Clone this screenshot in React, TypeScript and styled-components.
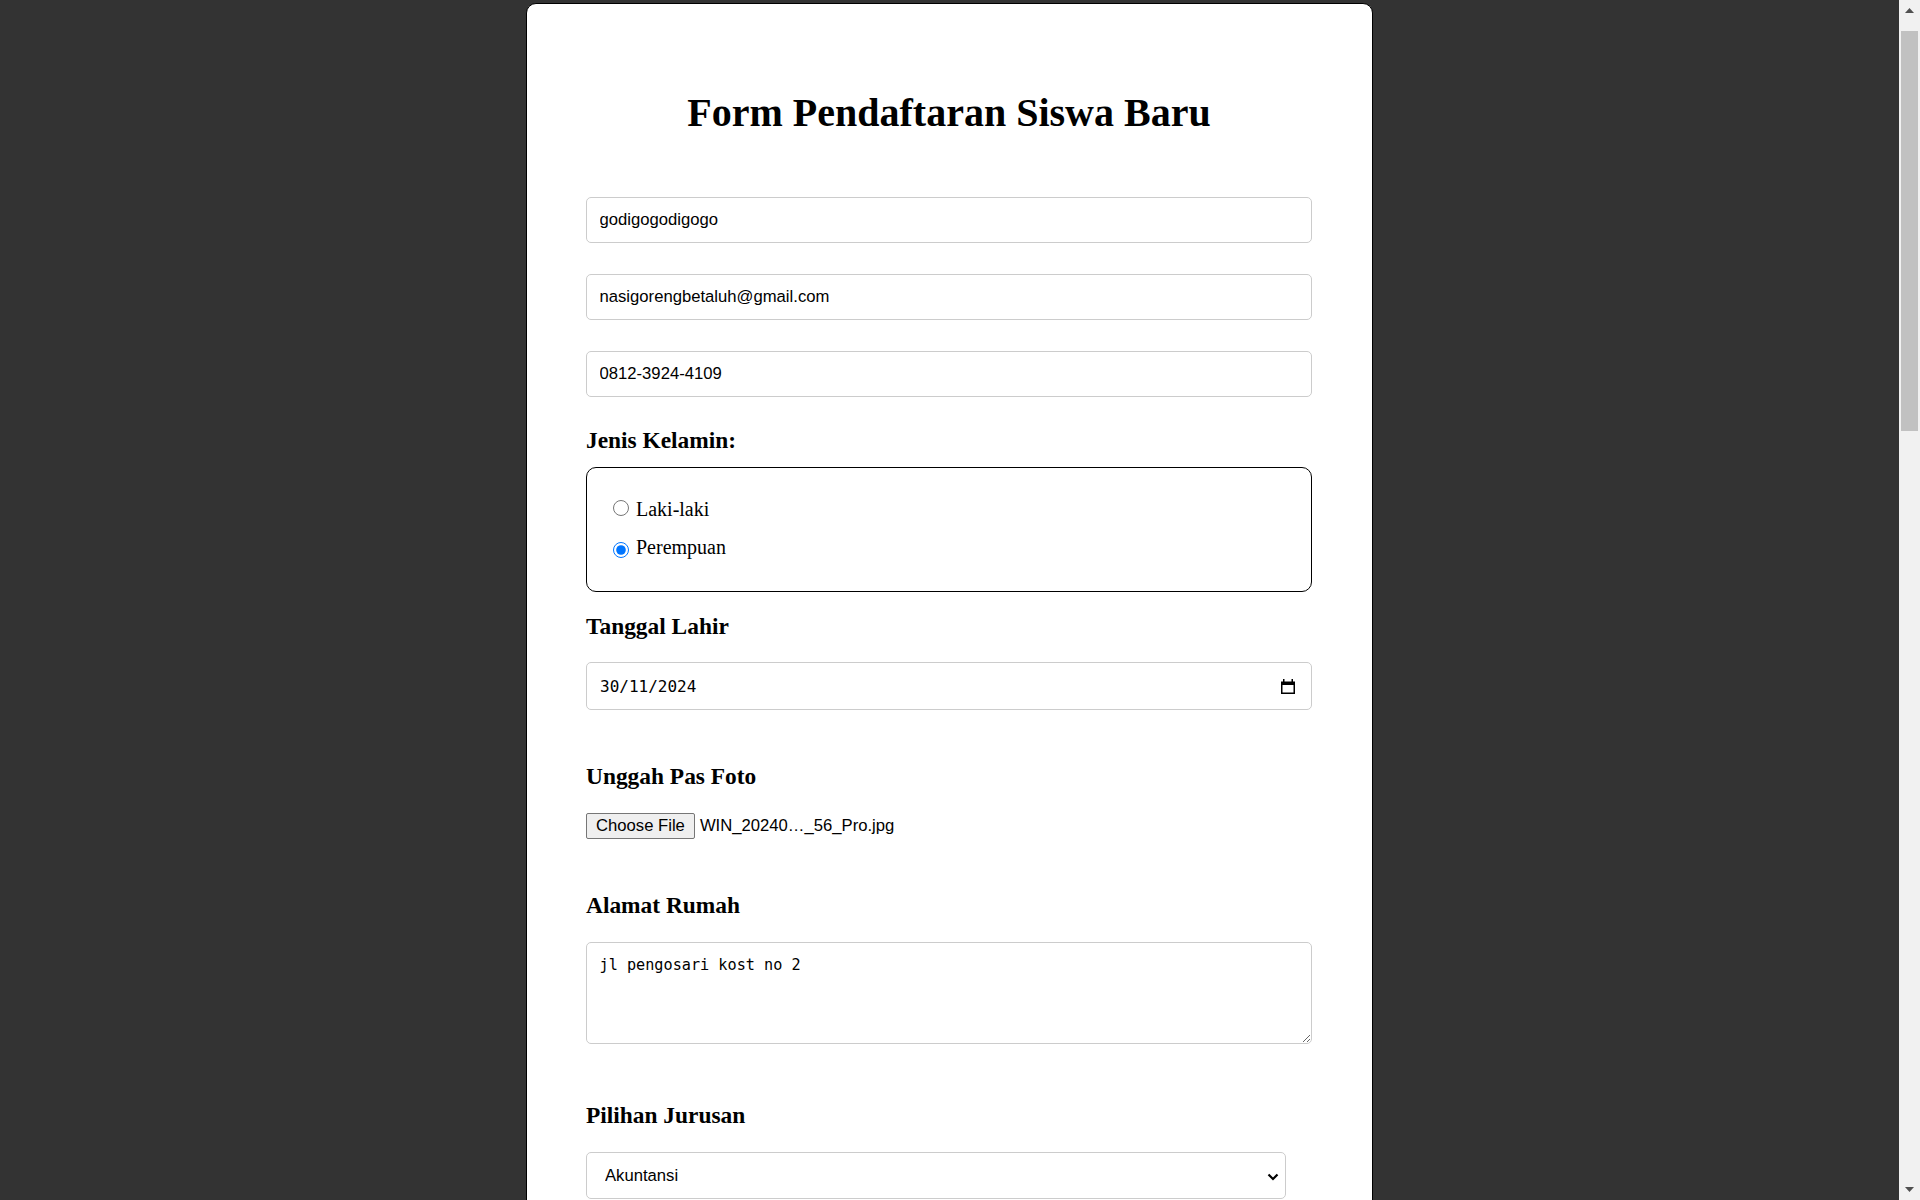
import React from "react";
import styled, { createGlobalStyle } from "styled-components";

const GlobalStyle = createGlobalStyle`
  html {
    background: #333333;
  }
  body {
    margin: 0;
    /* room for the page scrollbar drawn on the right */
    padding-right: 21px;
    background: #333333;
    font-family: "Liberation Serif", "Times New Roman", serif;
    font-size: 20px;
    color: #000;
  }
`;

const Card = styled.div`
  box-sizing: border-box;
  width: 847px;
  margin: 3px auto 11px;
  padding: 0 60px 120px 59px;
  background: #fff;
  border: 1px solid #000;
  border-radius: 10px;
`;

const Title = styled.h1`
  margin: 86px 0 61px;
  font-size: 40px;
  line-height: 46px;
  font-weight: 700;
  text-align: center;
`;

const Fields = styled.div`
  display: flex;
  flex-direction: column;
  gap: 31px;
`;

const TextInput = styled.input`
  box-sizing: border-box;
  display: block;
  width: 100%;
  height: 46px;
  margin: 0;
  padding: 0 12.5px;
  border: 1px solid #cccccc;
  border-radius: 5px;
  background: #fff;
  font-family: "Liberation Sans", Arial, sans-serif;
  font-size: 16.67px;
  color: #000;
  outline: none;
`;

const SectionLabel = styled.h3<{ $mt: number; $mb: number }>`
  margin: ${(p) => p.$mt}px 0 ${(p) => p.$mb}px;
  font-size: 23.4px;
  line-height: 27px;
  font-weight: 700;
`;

const RadioBox = styled.fieldset`
  box-sizing: border-box;
  height: 125px;
  margin: 0;
  padding: 30px 20px 0;
  border: 1px solid #000;
  border-radius: 10px;
  display: flex;
  flex-direction: column;
  gap: 15px;
`;

const RadioRow = styled.label`
  display: block;
  height: 23px;
  line-height: 23px;
  font-size: 20px;
`;

const Radio = styled.input<{ $drop: number }>`
  width: 16px;
  height: 16px;
  margin: 0 7px 0 6px;
  vertical-align: ${(p) => -p.$drop}px;
  accent-color: #0075ff;
`;

const DateBox = styled.label`
  box-sizing: border-box;
  display: flex;
  align-items: center;
  width: 100%;
  height: 48px;
  padding: 0 16px 0 13px;
  border: 1px solid #cccccc;
  border-radius: 5px;
  background: #fff;
`;

const DateText = styled.input`
  flex: 1;
  min-width: 0;
  padding: 0;
  border: none;
  outline: none;
  background: transparent;
  font-family: "DejaVu Sans Mono", "Liberation Mono", monospace;
  font-size: 16px;
  color: #000;
`;

const FileRow = styled.div`
  display: flex;
  align-items: center;
  gap: 5px;
  font-family: "Liberation Sans", Arial, sans-serif;
  font-size: 16.67px;
`;

const FileButton = styled.button`
  box-sizing: border-box;
  height: 26px;
  padding: 0 9px;
  border: 1px solid #767676;
  border-radius: 2px;
  background: #efefef;
  font-family: inherit;
  font-size: inherit;
  color: #000;
`;

const TextArea = styled.textarea`
  box-sizing: border-box;
  display: block;
  width: 100%;
  height: 102px;
  margin: 0;
  padding: 12.5px;
  border: 1px solid #cccccc;
  border-radius: 5px;
  font-family: "DejaVu Sans Mono", "Liberation Mono", monospace;
  font-size: 15.2px;
  color: #000;
  outline: none;
`;

const SelectWrap = styled.div`
  position: relative;
  width: 700px;
`;

const Select = styled.select`
  box-sizing: border-box;
  display: block;
  width: 100%;
  height: 47px;
  padding: 0 30px 0 18px;
  border: 1px solid #cccccc;
  border-radius: 5px;
  background: #fff;
  appearance: none;
  font-family: "Liberation Sans", Arial, sans-serif;
  font-size: 16.67px;
  color: #000;
  outline: none;
`;

const Chevron = styled.svg`
  position: absolute;
  right: 7px;
  top: 21px;
  pointer-events: none;
`;

/* the browser's classic scrollbar, laid over the right edge of the window */
const ScrollBar = styled.div`
  position: fixed;
  top: 0;
  right: 0;
  width: 21px;
  height: 100vh;
  display: flex;
  flex-direction: column;
  background: #f1f1f1;
`;

const ScrollArrow = styled.div`
  height: 21px;
  display: flex;
  align-items: center;
  justify-content: center;
`;

const ScrollTrack = styled.div`
  flex: 1;
  padding: 10px 2px 0;
`;

const ScrollThumb = styled.div`
  height: 400px;
  background: #c1c1c1;
`;

const CalendarIcon = () => (
  <svg width="14" height="15" viewBox="0 0 14 15">
    <rect x="2" y="0" width="1.5" height="3" fill="#000" />
    <rect x="10.5" y="0" width="1.5" height="3" fill="#000" />
    <path fillRule="evenodd" fill="#000" d="M0 2.5h14v12.5H0z M1.5 6h11v7.5h-11z" />
  </svg>
);

const App = () => {
  return (
    <>
      <GlobalStyle />
      <Card>
        <Title>Form Pendaftaran Siswa Baru</Title>
        <form onSubmit={(e) => e.preventDefault()}>
          <Fields>
            <TextInput type="text" defaultValue="godigogodigogo" />
            <TextInput type="email" defaultValue="nasigorengbetaluh@gmail.com" />
            <TextInput type="tel" defaultValue="0812-3924-4109" />
          </Fields>

          <SectionLabel $mt={30} $mb={13}>Jenis Kelamin:</SectionLabel>
          <RadioBox>
            <RadioRow>
              <Radio type="radio" name="gender" value="L" $drop={0} />
              Laki-laki
            </RadioRow>
            <RadioRow>
              <Radio type="radio" name="gender" value="P" $drop={4} defaultChecked />
              Perempuan
            </RadioRow>
          </RadioBox>

          <SectionLabel $mt={21} $mb={22}>Tanggal Lahir</SectionLabel>
          <DateBox>
            <DateText type="text" defaultValue="30/11/2024" />
            <CalendarIcon />
          </DateBox>

          <SectionLabel $mt={53} $mb={23}>Unggah Pas Foto</SectionLabel>
          <FileRow>
            <FileButton type="button">Choose File</FileButton>
            <span>WIN_20240…_56_Pro.jpg</span>
          </FileRow>

          <SectionLabel $mt={53} $mb={23}>Alamat Rumah</SectionLabel>
          <TextArea defaultValue="jl pengosari kost no 2" />

          <SectionLabel $mt={58} $mb={23}>Pilihan Jurusan</SectionLabel>
          <SelectWrap>
            <Select defaultValue="akuntansi">
              <option value="akuntansi">Akuntansi</option>
              <option value="tkj">Teknik Komputer dan Jaringan</option>
              <option value="rpl">Rekayasa Perangkat Lunak</option>
              <option value="multimedia">Multimedia</option>
            </Select>
            <Chevron width="12" height="8" viewBox="0 0 12 8">
              <polyline
                points="1.5,1.5 6,6 10.5,1.5"
                fill="none"
                stroke="#000"
                strokeWidth="2.2"
              />
            </Chevron>
          </SelectWrap>
        </form>
      </Card>

      <ScrollBar>
        <ScrollArrow>
          <svg width="9" height="5" viewBox="0 0 9 5">
            <polygon points="0,5 4.5,0 9,5" fill="#505050" />
          </svg>
        </ScrollArrow>
        <ScrollTrack>
          <ScrollThumb />
        </ScrollTrack>
        <ScrollArrow>
          <svg width="9" height="5" viewBox="0 0 9 5">
            <polygon points="0,0 9,0 4.5,5" fill="#505050" />
          </svg>
        </ScrollArrow>
      </ScrollBar>
    </>
  );
};

export default App;
